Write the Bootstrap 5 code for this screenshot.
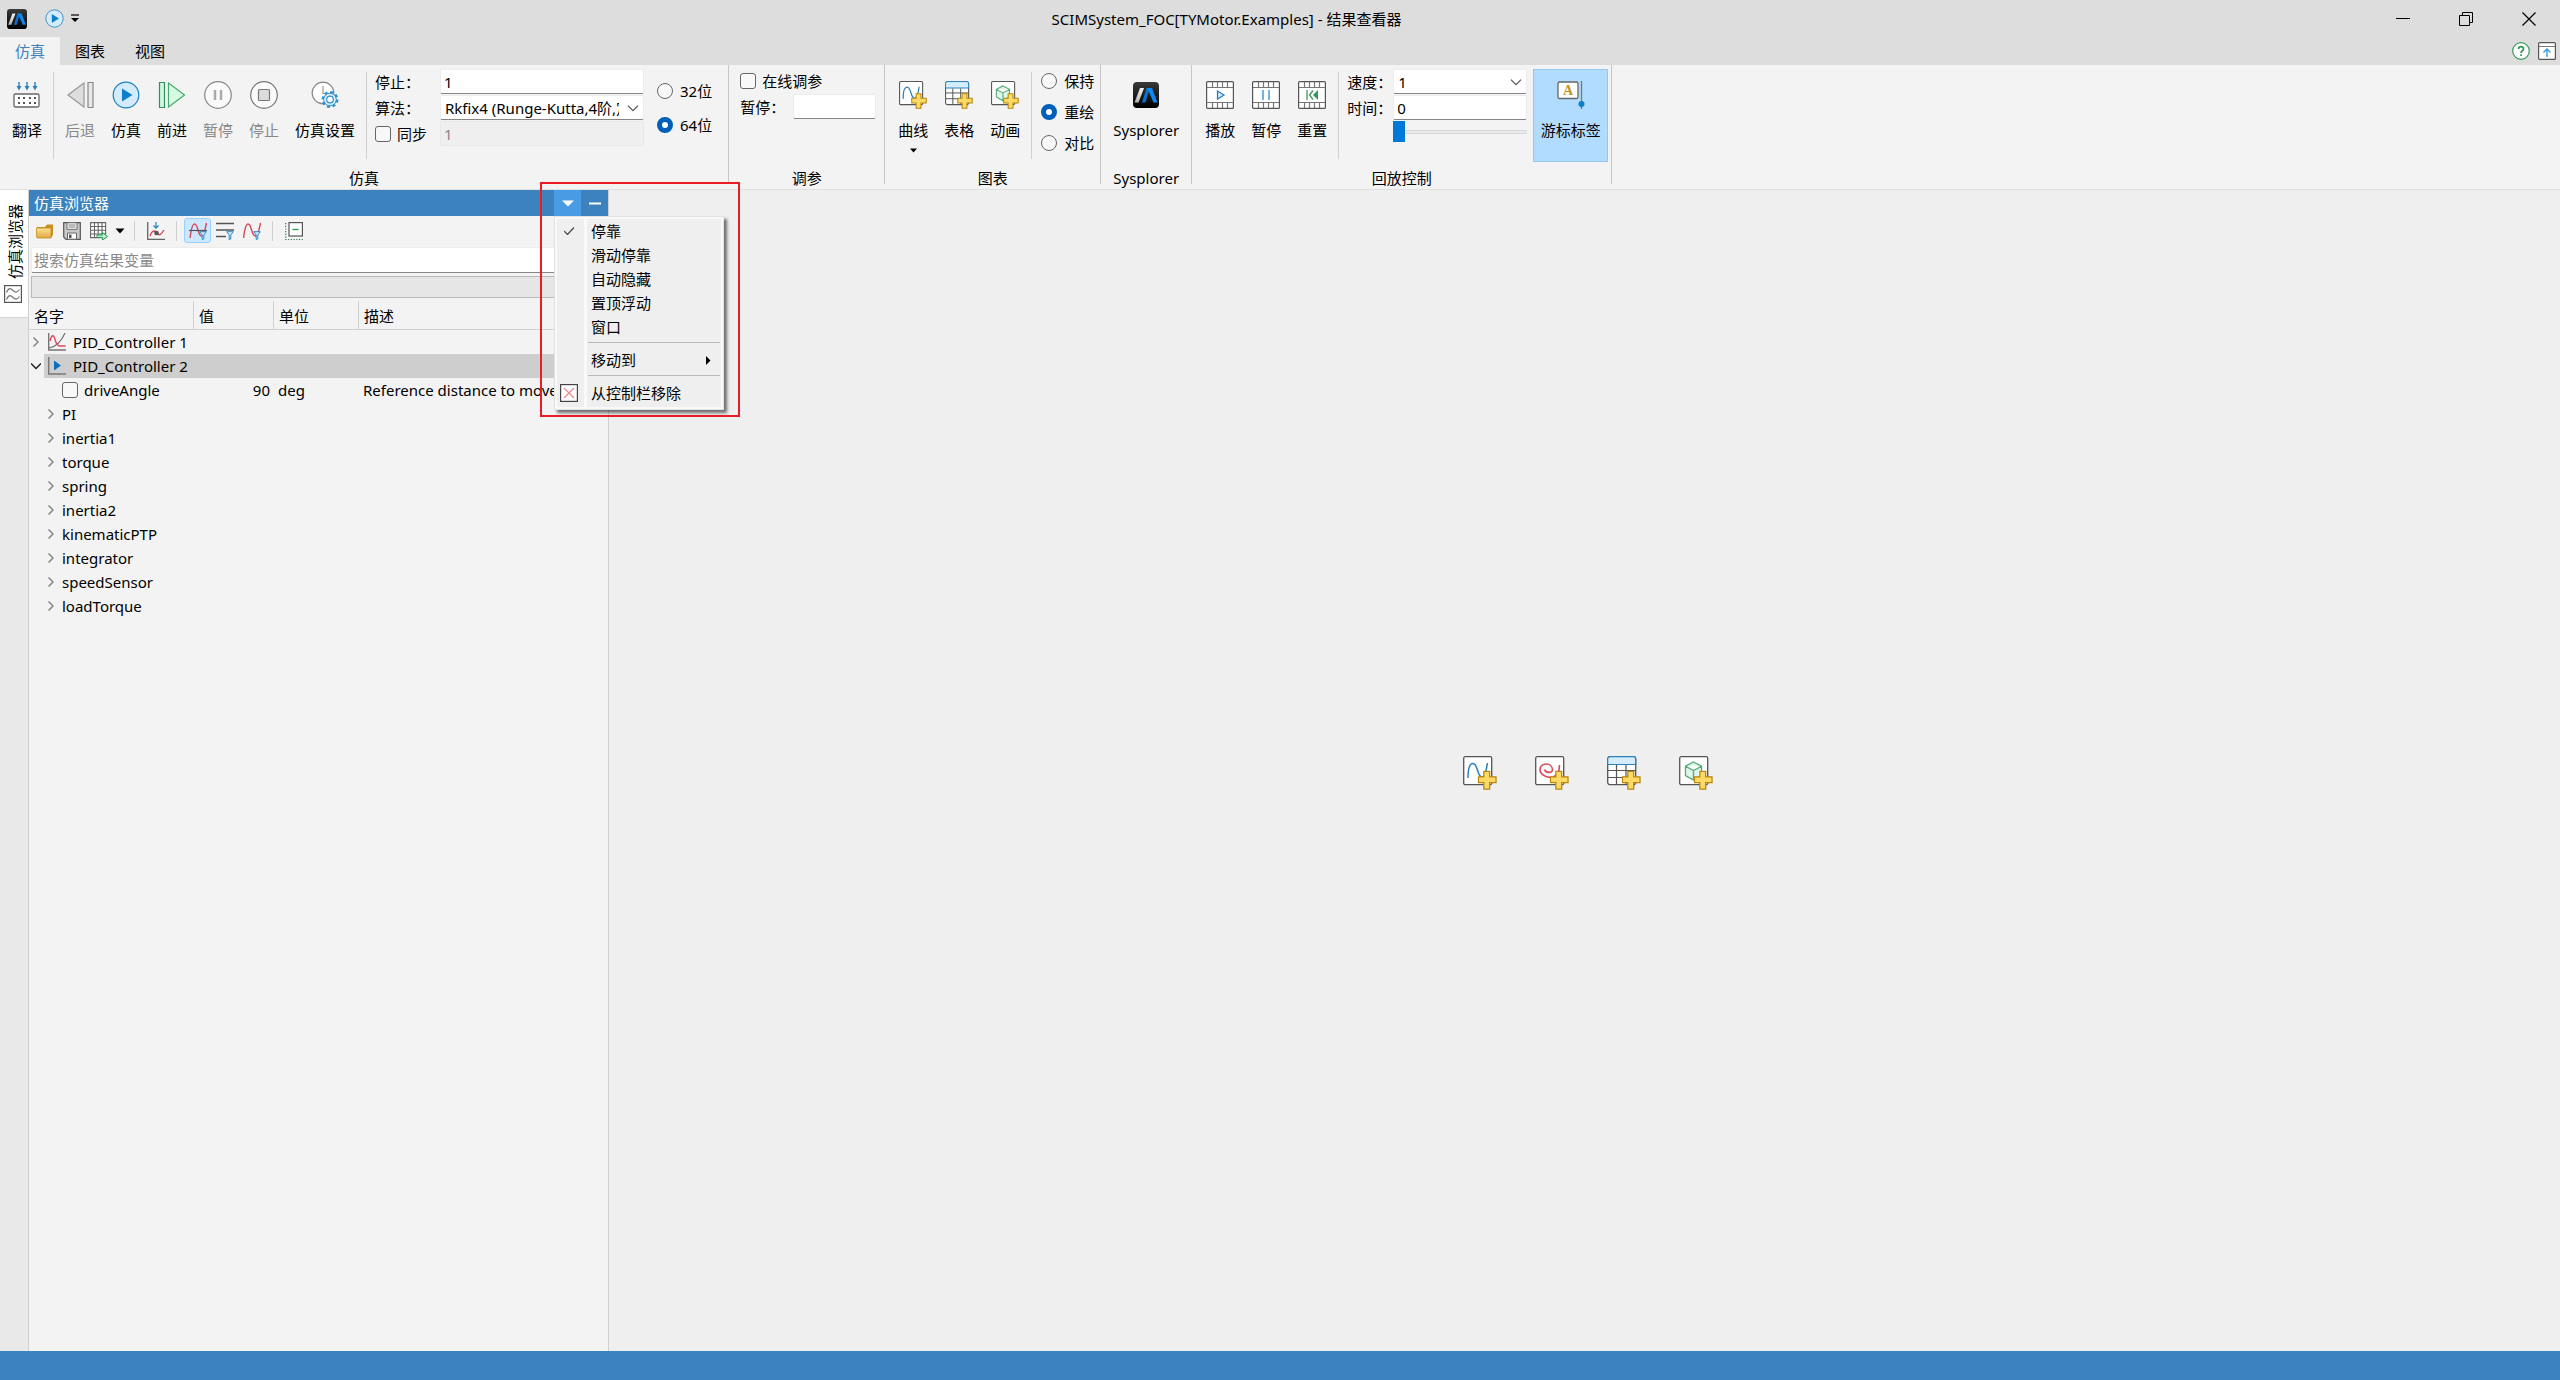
<!DOCTYPE html>
<html lang="zh-CN">
<head>
<meta charset="utf-8">
<meta name="viewport" content="width=device-width, initial-scale=1">
<title>SCIMSystem_FOC[TYMotor.Examples] - 结果查看器</title>
<link href="https://cdn.jsdelivr.net/npm/bootstrap@5.3.0/dist/css/bootstrap.min.css" rel="stylesheet">
<style>
body{font:15px/24px "Noto Sans","Noto Sans CJK SC",sans-serif;color:#000;background:#efefef;overflow:hidden}
svg{display:block;flex:none;fill:none}
button{font:inherit;color:inherit;border:0;background:none;padding:0}
label{white-space:nowrap}
/* title bar and tabs */
.titlebar{height:37px;background:#ddd}
.quick{width:82px;padding-left:7px;gap:18px}
.quick .qicons{gap:7px}
.winbtn{width:63px}
.tabbar{height:28px;background:#ddd;padding-right:4px;gap:8px}
.rtab{width:60px;height:28px;padding-top:2px;color:#000;text-decoration:none;text-align:center}
.rtab.active{background:#f3f3f3;color:#3c82be}
/* ribbon */
.ribbon{background:#f3f3f3;border-bottom:1px solid #e0e0e0;padding-bottom:5px}
.rgroup{border-right:1px solid #c6c6c6}
.rbody{height:101px}
.rtitle{height:18px;text-align:center}
.rbtn{width:46px;height:93px;padding-top:12px;margin-top:4px;display:flex;flex-direction:column;align-items:center;white-space:nowrap}
.rbtn span{margin-top:9px}
.rbtn svg:nth-of-type(2){margin-top:6px}
.rbtn.wide{width:76px}
.rbtn:disabled{color:#888}
.rbtn.on{background:#b1dcff;border:1px solid #92c8f3;width:75px;padding-top:11px;margin-right:3px}
.vsep{width:1px;height:87px;background:#d0d0d0;margin:7px 3px 0}
.fgrid{display:grid;grid-auto-rows:25px;gap:1px 0;align-items:center;align-content:start;padding-top:4px}
.fgrid.sim{grid-template-columns:65px 204px;margin-left:5px}
.fgrid.tune{grid-template-columns:53px 83px;padding:3px 8px 0 11px}
.fgrid.tune .checks{grid-column:span 2}
.fgrid.play{grid-template-columns:46px 134px;margin:0 6px 0 5px}
.bits{padding:14px 16px 0 13px;gap:10px}
.modes{padding:4px 6px 0 6px;gap:7px}
.charts{padding-left:5px}
.playback{padding-left:5px}
.sysp{padding:0 7px}
.form-control,.form-select{height:25px;border:1px solid #ececec;border-bottom-color:#868686;border-radius:2px;padding:0 3px;font-size:15px;line-height:22px;color:#000;background-color:#fff}
.form-control:disabled{background:#efefef;border-color:#e8e8e8;color:#888}
.form-select{padding:0 24px 0 4px;background-image:url("data:image/svg+xml,%3Csvg xmlns='http://www.w3.org/2000/svg' viewBox='0 0 10 10'%3E%3Cpath d='M.8 3l4.200 4.200L9.200 3' fill='none' stroke='%23555'/%3E%3C/svg%3E");background-size:12px;background-position:right 4px center;text-overflow:clip}
.form-check-input{width:16px;height:16px;margin:0;border:1px solid #666;background-color:#f8f8f8;flex:none}
.form-check-input[type=checkbox]{border-radius:3px}
.form-check-input:checked[type=radio]{border:5px solid #005fb8;background:#fff}
.radios{height:24px;gap:7px}
.checks{height:24px;gap:6px}
.seek{appearance:none;width:134px;height:21px;margin:0;background:linear-gradient(#e7eaea,#e7eaea) center/100% 2px no-repeat,linear-gradient(#d6d6d6,#d6d6d6) center/100% 4px no-repeat;align-self:start}
.seek::-webkit-slider-thumb{appearance:none;width:12px;height:21px;background:#0078d7;border-radius:0}
/* workspace */
.rail{width:29px;background:#e9e9e9;border-right:1px solid #cfcfcf}
.railtab{width:28px;height:128px;background:#fff;border-bottom:1px solid #d4d4d4;padding-left:4px;display:flex;flex-direction:column;justify-content:center;align-items:flex-start;gap:5px}
.railtab span{writing-mode:vertical-rl;text-orientation:sideways;transform:rotate(180deg);line-height:22px;white-space:nowrap}
.browser{width:580px;background:#f3f3f3;border-right:1px solid #cfcfcf}
.bhead{height:26px;background:#3c82be;color:#fff;padding-left:5px;line-height:26px}
.bhead button{width:27px;height:26px;display:grid;place-items:center}
.bhead .open{background:#489ce4}
.btools{height:31px;padding:0 0 2px 2px}
.btools button{width:27px;height:25px;display:grid;place-items:center;border-radius:3px}
.btools button.caret{width:15px}
.btools button.on{background:#cce8ff;border:1px solid #99d1ff}
.btools i{width:1px;height:20px;background:#cfcfcf;margin:0 7px}
.bsearch{padding:0 2px 3px}
.bsearch input{height:26px;padding:0 2px}
.bsearch input::placeholder{color:#8a8a8a}
.bfilter{height:22px;margin:0 2px;background:#e6e6e6;border:1px solid #b9b9b9}
.tree{table-layout:fixed;border-collapse:separate;border-spacing:0;margin-top:3px;width:100%}
.tree th{font-weight:400;height:29px;padding:2px 5px 0;border-bottom:1px solid #d0d0d0;border-right:1px solid #d0d0d0}
.tree th:last-child{border-right:0}
.tree td{height:24px;padding:0 4px;white-space:nowrap;overflow:hidden}
.tree .node{display:flex;align-items:center;height:24px}
.tree .leaf{padding-left:29px;gap:6px}
.tree .sel td{background:#cecece}
.tree .sel td:first-child{background:linear-gradient(90deg,#f3f3f3 15px,#cecece 15px)}
.tw{width:10px;height:10px;margin:0 7px 0 -2px}
.tw+svg{margin-right:7px}
.kid .tw{margin:0 6px 0 13px}
/* dock menu */
.dockmenu{left:525px;top:26px;width:170px;height:194px;background:#efefef linear-gradient(90deg,transparent 29px,#f9f9f9 29px,#f9f9f9 32px,transparent 32px);background-clip:padding-box;border:1px solid #e2e2e2;outline:2px solid #f9f9f9;outline-offset:-3px;box-shadow:3px 3px 3px #0008;padding:2px 3px;z-index:5}
.dockmenu button{display:flex;align-items:center;width:100%;height:24px;text-align:left}
.dockmenu button>span:first-child{width:33px;display:grid;place-items:center;padding-right:11px}
.dockmenu hr{margin:3px 0 5px 30px;border-color:#bbb;opacity:1;height:1px}
.frame{left:511px;top:-8px;width:200px;height:235px;border:2px solid #ed1c24;z-index:6;pointer-events:none}
.starter{padding:5px 0 0 6px}
.starter button{width:72px;display:grid;place-items:center}
.status{height:29px;background:#3c82be}
</style>
<script src="https://cdn.jsdelivr.net/npm/bootstrap@5.3.0/dist/js/bootstrap.bundle.min.js"></script>
</head>
<body class="d-flex flex-column vh-100">
<svg width="0" height="0" class="position-absolute" aria-hidden="true">
 <defs>
  <linearGradient id="gk" x1="0" y1="0" x2="0" y2="1"><stop stop-color="#3a3a3a"/><stop offset="1" stop-color="#000"/></linearGradient>
  <linearGradient id="gs" x1="1" y1="0" x2="0" y2="1"><stop stop-color="#fff"/><stop offset="1" stop-color="#aaa"/></linearGradient>
  <linearGradient id="gf" x1="0" y1="0" x2="0" y2="1"><stop stop-color="#fbe396"/><stop offset="1" stop-color="#e0a93c"/></linearGradient>
  <symbol id="logo" viewBox="0 0 26 26"><rect width="26" height="26" rx="4" fill="url(#gk)"/><path d="M1.500 20.500 7 6h4L5.500 20.500z" fill="url(#gs)"/><path d="M9 20.500 13.500 6h3.500l-4.500 14.500z" fill="#0a6fd0"/><path d="M14 6h5l5.500 14.500h-4L16.500 11z" fill="#1287f0"/></symbol>
  <symbol id="plus" viewBox="0 0 20 20"><path d="M6.500 1h6v5.500H19v6h-6.500V19h-6v-6.500H1v-6h5.500z" fill="#ffd966" stroke="#b8860b" stroke-width="1.300"/></symbol>
  <symbol id="curve" viewBox="0 0 34 34"><rect x=".7" y=".7" width="28" height="28" rx="1.500" fill="#fff" stroke="#555" stroke-width="1.300"/><path d="M5 22C5 12 7 7.500 10 7.500c5 0 4 13.500 9 13.500 3 0 4-5 5.500-14" stroke="#2a80b9" stroke-width="1.500"/><use href="#plus" x="14.500" y="14.500" width="19.500" height="19.500"/></symbol>
  <symbol id="spiral" viewBox="0 0 34 34"><rect x=".7" y=".7" width="28" height="28" rx="1.500" fill="#fff" stroke="#555" stroke-width="1.300"/><path d="M9.500 13.500c1 3.500 7.500 4 8 .5 0-8-12.500-8-12.500-.5C5 19 13 22.500 18 21c5-2 6.500-6 6.500-12" stroke="#e04558" stroke-width="1.600"/><use href="#plus" x="14.500" y="14.500" width="19.500" height="19.500"/></symbol>
  <symbol id="grid" viewBox="0 0 34 34"><rect x=".7" y=".7" width="28" height="28" rx="2.500" fill="#fff" stroke="#555" stroke-width="1.300"/><path d="M1 14.500h28M1 21.500h28M9.500 9v19.500M19 9v19.500" stroke="#555" stroke-width="1.200"/><path d="M.7 8.500V3Q.7.7 3 .7h23.500q2.200 0 2.200 2.300v5.500z" fill="#d5ecfb" stroke="#2a80b9" stroke-width="1.200"/><use href="#plus" x="14.500" y="14.500" width="19.500" height="19.500"/></symbol>
  <symbol id="cube" viewBox="0 0 34 34"><rect x=".7" y=".7" width="28" height="28" rx="1.500" fill="#fff" stroke="#555" stroke-width="1.300"/><path d="m14.500 6 8 4.200v9.300l-8 4.500-8-4.500v-9.300zM6.500 10.200l8 4.300 8-4.300M14.500 14.500V24" fill="#dff7e8" stroke="#55a878" stroke-width="1.300"/><use href="#plus" x="14.500" y="14.500" width="19.500" height="19.500"/></symbol>
  <symbol id="film" viewBox="0 0 28 28"><rect x=".6" y=".6" width="26.800" height="26.800" rx="1" fill="#fff" stroke="#555" stroke-width="1.200"/><path d="M1 6.500h26M1 21.500h26M6.500 1v5.500M11.500 1v5.500M16.500 1v5.500M21.500 1v5.500M6.500 21.500V27M11.500 21.500V27M16.500 21.500V27M21.500 21.500V27" stroke="#777" stroke-width="1.200"/></symbol>
  <symbol id="play" viewBox="0 0 28 28"><circle cx="14" cy="14" r="12.800" fill="#d3ebfd" stroke="#1b82c0" stroke-width="1.200"/><path d="M10 7.500 20.500 14 10 20.500z" fill="#0c80c8"/></symbol>
  <symbol id="funnel" viewBox="0 0 8 9"><path d="M.7.7h6.600L4.800 4v4l-1.600.5V4z" fill="#d5ecfb" stroke="#2a8ac8"/></symbol>
  <symbol id="right" viewBox="0 0 10 10"><path d="m2.500.500 4.500 4.500-4.500 4.500" stroke="#888" stroke-width="1.500"/></symbol>
  <symbol id="caret" viewBox="0 0 9 6"><path d="M0 .5h9L4.500 5.500z" fill="currentColor"/></symbol>
 </defs>
</svg>

<header class="titlebar d-flex align-items-center">
 <div class="quick d-flex align-items-center">
  <svg width="20" height="20"><use href="#logo"/></svg>
  <div class="qicons d-flex align-items-center">
   <button aria-label="仿真"><svg width="19" height="19"><use href="#play"/></svg></button>
   <button aria-label="自定义"><svg width="8" height="9" viewBox="0 0 8 9"><path d="M0 1h8" stroke="#000" stroke-width="1.200"/><path d="M0 4h8L4 8z" fill="#000"/></svg></button>
  </div>
 </div>
 <div class="flex-grow-1 text-center">SCIMSystem_FOC[TYMotor.Examples] - 结果查看器</div>
 <button class="winbtn d-grid justify-content-center" aria-label="最小化"><svg width="14" height="14"><path d="M0 6.500h14" stroke="#000"/></svg></button>
 <button class="winbtn d-grid justify-content-center" aria-label="还原"><svg width="14" height="14"><path d="M.5 3.500h10v10H.5zM3.500 3.500v-3h10v10h-3" stroke="#000"/></svg></button>
 <button class="winbtn d-grid justify-content-center" aria-label="关闭"><svg width="14" height="14"><path d="m.5.5 13 13m0-13-13 13" stroke="#000" stroke-width="1.200"/></svg></button>
</header>

<nav class="tabbar d-flex align-items-center">
 <div class="d-flex me-auto"><a class="rtab active" href="#">仿真</a><a class="rtab" href="#">图表</a><a class="rtab" href="#">视图</a></div>
 <button aria-label="帮助"><svg width="18" height="18"><circle cx="9" cy="9" r="8.300" fill="#fff" stroke="#3a9a5c" stroke-width="1.200"/><path d="M6.500 7c0-3.200 5-3.200 5 0 0 1.800-2.500 1.800-2.500 4M9 12.200v1.800" stroke="#2f9a55" stroke-width="1.700"/></svg></button>
 <button aria-label="折叠功能区"><svg width="18" height="18"><rect x=".6" y=".6" width="16.800" height="16.800" rx="1" fill="#fff" stroke="#555" stroke-width="1.200"/><path d="M1 4.500h16" stroke="#777"/><path d="M9 15V7M5.500 10.500 9 7l3.500 3.500" stroke="#3a9ad8" stroke-width="1.400"/></svg></button>
</nav>

<section class="ribbon d-flex">
 <div class="rgroup">
  <div class="rbody d-flex">
   <button class="rbtn ms-1"><svg width="28" height="28"><path d="M6 1v6M14 1v6M22 1v6" stroke="#2a80b9" stroke-width="1.400"/><path d="M3.500 5h5L6 9.500zM11.500 5h5L14 9.500zM19.500 5h5L22 9.500z" fill="#2a80b9"/><rect x="1" y="13" width="25" height="13" rx="1.500" fill="#fff" stroke="#666" stroke-width="1.300"/><path d="M5 17h2m3 0h2m4 0h2m3 0h2M5 22h2m3 0h2m4 0h2m3 0h2" stroke="#555" stroke-width="2"/></svg><span>翻译</span></button>
   <div class="vsep"></div>
   <button class="rbtn" disabled><svg width="28" height="28"><path d="M18 2v24L2 14z" fill="#ddd" stroke="#999" stroke-width="1.200"/><path d="M22 1.500h5v25h-5z" fill="#e8e8e8" stroke="#888" stroke-width="1.200"/></svg><span>后退</span></button>
   <button class="rbtn"><svg width="28" height="28"><use href="#play"/></svg><span>仿真</span></button>
   <button class="rbtn"><svg width="28" height="28"><path d="M1.500 1.500h5v25h-5z" fill="#d0f8df" stroke="#2f8f60" stroke-width="1.200"/><path d="M10.500 2v24L26.500 14z" fill="#d5fbe3" stroke="#4aa96c" stroke-width="1.200"/></svg><span>前进</span></button>
   <button class="rbtn" disabled><svg width="28" height="28"><circle cx="14" cy="14" r="13.300" fill="#fafafa" stroke="#888" stroke-width="1.200"/><path d="M11 9v10M17 9v10" stroke="#aaa" stroke-width="2.500"/></svg><span>暂停</span></button>
   <button class="rbtn" disabled><svg width="28" height="28"><circle cx="14" cy="14" r="13.300" fill="#fafafa" stroke="#777" stroke-width="1.200"/><rect x="8.500" y="8.500" width="11" height="11" rx="1" fill="#ddd" stroke="#777" stroke-width="1.200"/></svg><span>停止</span></button>
   <button class="rbtn wide"><svg width="28" height="28"><circle cx="12" cy="12" r="10.800" fill="#fff" stroke="#888" stroke-width="1.200"/><path d="M12 5v7.500h4" stroke="#999" stroke-width="1.200"/><circle cx="19" cy="18.500" r="7.200" stroke="#2f8fd0" stroke-width="2.600" stroke-dasharray="3 2.650"/><circle cx="19" cy="18.500" r="6.300" fill="#d8edfc" stroke="#2f8fd0"/><circle cx="19" cy="18.500" r="3.300" fill="#fff" stroke="#2f8fd0" stroke-width="1.200"/></svg><span>仿真设置</span></button>
   <div class="vsep"></div>
   <div class="fgrid sim">
    <label for="stop">停止：</label><input id="stop" class="form-control" value="1">
    <label for="algo">算法：</label><select id="algo" class="form-select"><option>Rkfix4 (Runge-Kutta,4阶,定步长)</option></select>
    <div class="checks d-flex align-items-center"><input class="form-check-input" type="checkbox" id="sync"><label for="sync">同步</label></div><input class="form-control" value="1" disabled aria-label="同步值">
   </div>
   <div class="d-flex flex-column bits">
    <div class="radios d-flex align-items-center"><input class="form-check-input" type="radio" name="bits" id="b32"><label for="b32">32位</label></div>
    <div class="radios d-flex align-items-center"><input class="form-check-input" type="radio" name="bits" id="b64" checked><label for="b64">64位</label></div>
   </div>
  </div>
  <div class="rtitle">仿真</div>
 </div>

 <div class="rgroup">
  <div class="rbody">
   <div class="fgrid tune">
    <div class="checks d-flex align-items-center"><input class="form-check-input" type="checkbox" id="online"><label for="online">在线调参</label></div>
    <label for="pause">暂停：</label><input id="pause" class="form-control">
   </div>
  </div>
  <div class="rtitle">调参</div>
 </div>

 <div class="rgroup">
  <div class="rbody d-flex charts">
   <button class="rbtn"><svg width="28" height="28"><use href="#curve"/></svg><span>曲线</span><svg width="7" height="5"><use href="#caret"/></svg></button>
   <button class="rbtn"><svg width="28" height="28"><use href="#grid"/></svg><span>表格</span></button>
   <button class="rbtn"><svg width="28" height="28"><use href="#cube"/></svg><span>动画</span></button>
   <div class="vsep"></div>
   <div class="d-flex flex-column modes">
    <div class="radios d-flex align-items-center"><input class="form-check-input" type="radio" name="mode" id="keep"><label for="keep">保持</label></div>
    <div class="radios d-flex align-items-center"><input class="form-check-input" type="radio" name="mode" id="redraw" checked><label for="redraw">重绘</label></div>
    <div class="radios d-flex align-items-center"><input class="form-check-input" type="radio" name="mode" id="compare"><label for="compare">对比</label></div>
   </div>
  </div>
  <div class="rtitle">图表</div>
 </div>

 <div class="rgroup">
  <div class="rbody d-flex sysp">
   <button class="rbtn wide"><svg width="28" height="28" viewBox="-1 -1 28 28"><use href="#logo" width="26" height="26"/></svg><span>Sysplorer</span></button>
  </div>
  <div class="rtitle">Sysplorer</div>
 </div>

 <div class="rgroup">
  <div class="rbody d-flex playback">
   <button class="rbtn"><svg width="28" height="28"><use href="#film"/><path d="m11.500 10 6.500 4-6.500 4z" fill="#d5ecfb" stroke="#2a80b9" stroke-width="1.300"/></svg><span>播放</span></button>
   <button class="rbtn"><svg width="28" height="28"><use href="#film"/><path d="M11 9v10M17 9v10" stroke="#2a8ad0" stroke-width="1.300"/></svg><span>暂停</span></button>
   <button class="rbtn"><svg width="28" height="28"><use href="#film"/><path d="M9 9v10M15 9.500 11.500 14l3.500 4.500" stroke="#3a9a5c" stroke-width="1.300"/><path d="M20 9v10l-5-5z" fill="#2f9a55"/></svg><span>重置</span></button>
   <div class="vsep"></div>
   <div class="fgrid play">
    <label for="speed">速度：</label><select id="speed" class="form-select"><option>1</option></select>
    <label for="time">时间：</label><input id="time" class="form-control" value="0">
    <span></span><input class="seek" type="range" min="0" max="100" value="0" aria-label="播放进度">
   </div>
   <button class="rbtn on"><svg width="28" height="28"><rect x="1" y="1" width="20" height="16.500" rx="1.500" fill="#fff" stroke="#666" stroke-width="1.300"/><text x="11" y="14" text-anchor="middle" font-family="Liberation Serif" font-size="14" font-weight="700" fill="#c6921c">A</text><path d="M24.500 0v28" stroke="#777" stroke-width="1.300"/><circle cx="24.500" cy="23" r="3" fill="#0c80c8"/></svg><span>游标标签</span></button>
  </div>
  <div class="rtitle">回放控制</div>
 </div>
</section>

<div class="d-flex flex-grow-1">
 <aside class="rail">
  <button class="railtab"><span>仿真浏览器</span><svg width="18" height="18"><rect x=".6" y=".6" width="16.800" height="16.800" fill="#fff" stroke="#555" stroke-width="1.200"/><path d="M2.500 7.500C5 2 7 3.500 9 5.500s4 2.500 6.500-1M2.500 14.500C5 9 7 10.500 9 12.500s4 2.500 6.500-1" stroke="#777" stroke-width="1.200"/></svg></button>
 </aside>

 <aside class="browser position-relative">
  <div class="bhead d-flex"><span class="me-auto">仿真浏览器</span>
   <button class="open" aria-label="窗口菜单" aria-expanded="true"><svg width="12" height="7" viewBox="0 0 9 6" preserveAspectRatio="none"><use href="#caret"/></svg></button>
   <button aria-label="最小化"><svg width="12" height="3"><path d="M0 1.500h12" stroke="#fff" stroke-width="2"/></svg></button>
  </div>
  <div class="btools d-flex align-items-center">
   <button aria-label="打开"><svg width="18" height="18"><path d="M1 15.500V5h8l2-2.500h6v10l-1.500 3z" fill="#c98f25"/><path d="M.5 6h13.500q1 0 1 1v9H2q-1.500 0-1.500-1.500z" fill="url(#gf)" stroke="#c08a1f" stroke-width=".8"/></svg></button>
   <button aria-label="保存"><svg width="18" height="18"><path d="M.7.7h16.600v16.600H3L.7 15z" fill="#c9c9c9" stroke="#555" stroke-width="1.200"/><path d="M4 .8h10v6.500H4zM4.500 11h9v6.200h-9z" fill="#fff" stroke="#666"/><path d="M5.500 3h7M5.500 5h7" stroke="#777"/><path d="M6 12.500h2.500V16H6z" fill="#555"/></svg></button>
   <button aria-label="导出"><svg width="18" height="18"><path d="M.6.6h15v15H.6zM.6 4.500h15M.6 8.200h15M.6 12h15M4.500.6v15M8.200.6v15M12 .6v15" fill="#fff" stroke="#666" stroke-width="1.100"/><path d="M7 13h5.500v-2.500L17.500 14.500l-5 3.500v-2.500H7z" fill="#bdf0cf" stroke="#2f9a55"/></svg></button>
   <button class="caret" aria-label="更多"><svg width="10" height="6"><use href="#caret"/></svg></button><i></i>
   <button aria-label="变量曲线"><svg width="18" height="18"><path d="M.7 0v17.300H18" stroke="#666" stroke-width="1.300"/><path d="M3 14c2-6 5-6 7-3s4 2 7-3" stroke="#d9455a" stroke-width="1.400"/><path d="M9 0v6M6.500 3.500 9 6.200l2.500-2.700" stroke="#2a80b9" stroke-width="1.200"/><circle cx="9.500" cy="11" r="2.300" fill="#555"/></svg></button><i></i>
   <button class="on" aria-label="筛选曲线"><svg width="18" height="18"><path d="M1 16C2 8 3 2 5.500 2c4 0 3 12 7 12C15 14 16 8 17.500 1" stroke="#d9455a" stroke-width="1.400"/><path d="M0 8.500h18" stroke="#555" stroke-width="1.200"/><use href="#funnel" x="10" y="9" width="8" height="9"/></svg></button>
   <button aria-label="筛选列表"><svg width="18" height="18"><path d="M0 1.500h18M0 8h18M0 14.500h10" stroke="#555" stroke-width="1.300"/><use href="#funnel" x="10" y="9" width="8" height="9"/></svg></button>
   <button aria-label="筛选变化变量"><svg width="18" height="18"><path d="M.5 16C1.500 8 2.500 2 5 2c4 0 3 12 7.500 12C15 14 16 8 17.500 1" stroke="#d9455a" stroke-width="1.400"/><use href="#funnel" x="10" y="9" width="8" height="9"/></svg></button><i></i>
   <button aria-label="全部折叠"><svg width="18" height="18"><rect x="4" y=".6" width="13.400" height="13.400" fill="#fff" stroke="#555" stroke-width="1.200"/><path d="M7.500 7.500h6" stroke="#2f9a55" stroke-width="1.400"/><path d="M.7 1v16.500H18" stroke="#3a7a50" stroke-width="1.200" stroke-dasharray="1.200 1.500"/></svg></button>
  </div>
  <div class="bsearch"><input class="form-control" placeholder="搜索仿真结果变量" aria-label="搜索仿真结果变量"></div>
  <div class="bfilter"></div>
  <table class="tree">
   <colgroup><col style="width:165px"><col style="width:80px"><col style="width:85px"><col></colgroup>
   <thead><tr><th>名字</th><th>值</th><th>单位</th><th>描述</th></tr></thead>
   <tbody>
    <tr><td><div class="node"><svg class="tw"><use href="#right"/></svg><svg width="18" height="18"><path d="M.7 0v17H18" stroke="#777" stroke-width="1.400"/><path d="M1 15C8 14 13 9 17 0" stroke="#666" stroke-width="1.100"/><path d="M2 8c2-8 4-6 5.500 0S12 13 17.500 13" stroke="#e04558" stroke-width="1.400"/></svg>PID_Controller 1</div></td><td></td><td></td><td></td></tr>
    <tr class="sel"><td><div class="node"><svg class="tw" viewBox="0 0 10 10"><path d="m0 2.500 5 5 5-5" stroke="#222" stroke-width="1.500"/></svg><svg width="18" height="18"><path d="M.7 0v17H18" stroke="#777" stroke-width="1.400"/><path d="m6 3.500 7 5-7 5z" fill="#0c70c0"/></svg>PID_Controller 2</div></td><td></td><td></td><td></td></tr>
    <tr><td><div class="node leaf"><input class="form-check-input" type="checkbox" id="drive"><label for="drive">driveAngle</label></div></td><td class="text-end">90</td><td>deg</td><td>Reference distance to move</td></tr>
    <tr class="kid"><td><div class="node"><svg class="tw"><use href="#right"/></svg>PI</div></td></tr>
    <tr class="kid"><td><div class="node"><svg class="tw"><use href="#right"/></svg>inertia1</div></td></tr>
    <tr class="kid"><td><div class="node"><svg class="tw"><use href="#right"/></svg>torque</div></td></tr>
    <tr class="kid"><td><div class="node"><svg class="tw"><use href="#right"/></svg>spring</div></td></tr>
    <tr class="kid"><td><div class="node"><svg class="tw"><use href="#right"/></svg>inertia2</div></td></tr>
    <tr class="kid"><td><div class="node"><svg class="tw"><use href="#right"/></svg>kinematicPTP</div></td></tr>
    <tr class="kid"><td><div class="node"><svg class="tw"><use href="#right"/></svg>integrator</div></td></tr>
    <tr class="kid"><td><div class="node"><svg class="tw"><use href="#right"/></svg>speedSensor</div></td></tr>
    <tr class="kid"><td><div class="node"><svg class="tw"><use href="#right"/></svg>loadTorque</div></td></tr>
   </tbody>
  </table>

  <div class="dockmenu position-absolute">
   <button><span><svg width="10" height="8"><path d="m0 4 3.500 3.500L10 .5" stroke="#444" stroke-width="1.200"/></svg></span>停靠</button>
   <button><span></span>滑动停靠</button>
   <button><span></span>自动隐藏</button>
   <button><span></span>置顶浮动</button>
   <button><span></span>窗口</button>
   <hr>
   <button><span></span>移动到<svg class="ms-auto me-1" width="10" height="9"><path d="M0 0v9l4.500-4.500z" fill="#000"/></svg></button>
   <hr>
   <button><span><svg width="18" height="18"><rect x=".6" y=".6" width="16.800" height="16.800" fill="#fff" stroke="#444" stroke-width="1.200"/><path d="m4 4 10 10M14 4 4 14" stroke="#f08a90" stroke-width="1.400"/></svg></span>从控制栏移除</button>
  </div>
  <div class="frame position-absolute"></div>
 </aside>

 <main class="flex-grow-1 d-flex align-items-center justify-content-center">
  <div class="starter d-flex">
   <button aria-label="新建曲线窗口"><svg width="34" height="34"><use href="#curve"/></svg></button>
   <button aria-label="新建二维曲线窗口"><svg width="34" height="34"><use href="#spiral"/></svg></button>
   <button aria-label="新建表格窗口"><svg width="34" height="34"><use href="#grid"/></svg></button>
   <button aria-label="新建动画窗口"><svg width="34" height="34"><use href="#cube"/></svg></button>
  </div>
 </main>
</div>
<footer class="status"></footer>
</body>
</html>
